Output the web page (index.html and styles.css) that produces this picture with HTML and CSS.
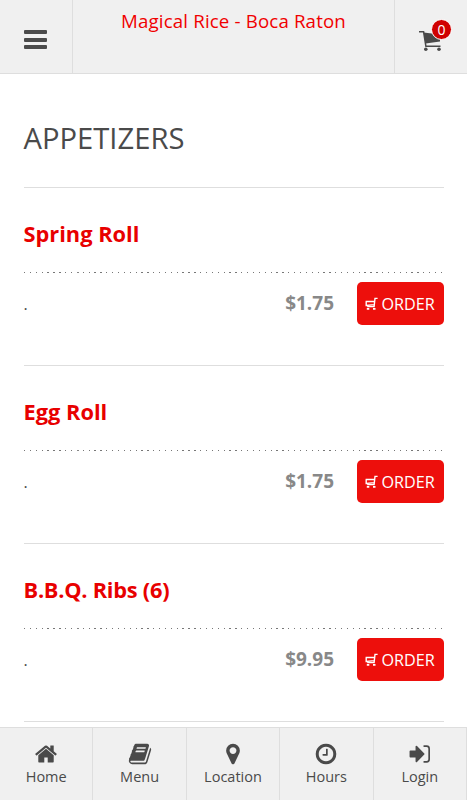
FILE: index.html
```html
<!DOCTYPE html>
<html lang="en">
<head>
<meta charset="utf-8">
<title>Magical Rice - Boca Raton</title>
<link rel="stylesheet" href="styles.css">
</head>
<body>
<svg class="defs" width="0" height="0">
  <symbol id="order-cart" viewBox="0 0 13 13">
    <path d="M.6 4.500H9M1.200 4.500V8.500L9.500 7.600M12.600 1.400H10L9.100 9.600H2.200" fill="none" stroke="currentColor" stroke-width="1.400"/>
    <path d="M1.800 11h2.500v1.800H1.800zM8 11h2.500v1.800H8z" fill="currentColor"/>
  </symbol>
</svg>
<div class="app">
  <header class="topbar">
    <button class="topbar-side menu-button" aria-label="Menu"><span class="bars"><i></i><i></i><i></i></span></button>
    <h1 class="brand"><span>Magical Rice - Boca Raton</span></h1>
    <button class="topbar-side cart-button" aria-label="Cart">
      <span class="cart">
        <svg class="cart-icon" viewBox="0 0 24 22" fill="none" stroke="#4a4a4a">
          <path d="M0 1.800H4.600L6.900 16.300H21.500" stroke-width="1.500"/>
          <path d="M4.600 2.500L21 4.500V11.400L6.600 13.500Z" fill="#4a4a4a" stroke="none"/>
          <circle cx="6.800" cy="19.200" r="1.800" fill="#4a4a4a" stroke="none"/>
          <circle cx="20" cy="19.200" r="1.800" fill="#4a4a4a" stroke="none"/>
        </svg>
        <span class="badge">0</span>
      </span>
    </button>
  </header>
  <main class="content">
    <h2 class="section"><span>APPETIZERS</span></h2>
    <article class="item">
      <h3 class="item-name"><span>Spring Roll</span></h3>
      <div class="item-row"><span class="desc">.</span><span class="price">$1.75</span><button class="order"><svg><use href="#order-cart"/></svg><span>ORDER</span></button></div>
    </article>
    <article class="item">
      <h3 class="item-name"><span>Egg Roll</span></h3>
      <div class="item-row"><span class="desc">.</span><span class="price">$1.75</span><button class="order"><svg><use href="#order-cart"/></svg><span>ORDER</span></button></div>
    </article>
    <article class="item">
      <h3 class="item-name item-name-tight"><span>B.B.Q. Ribs (6)</span></h3>
      <div class="item-row"><span class="desc">.</span><span class="price">$9.95</span><button class="order"><svg><use href="#order-cart"/></svg><span>ORDER</span></button></div>
    </article>
  </main>
  <nav class="tabs">
    <a class="tab"><svg viewBox="0 0 1792 1792"><path d="M1472 992v480q0 26-19 45t-45 19h-384v-384h-256v384h-384q-26 0-45-19t-19-45v-480q0-1 .5-3t.5-3l575-474 575 474q1 2 1 6zm223-69l-62 74q-8 9-21 11h-3q-13 0-21-7l-692-577-692 577q-12 8-24 7-13-2-21-11l-62-74q-8-10-7-23.5t11-21.5l719-599q32-26 76-26t76 26l244 204v-195q0-14 9-23t23-9h192q14 0 23 9t9 23v408l219 182q10 8 11 21.5t-7 23.5z"/></svg><span>Home</span></a>
    <a class="tab"><svg viewBox="0 0 1792 1792"><path d="M1703 478q40 57 18 129l-275 906q-19 64-76.500 107.500t-122.500 43.500h-923q-77 0-148.500-53.500t-99.500-131.500q-24-67-2-127 0-4 3-27t4-37q1-8-3-21.500t-3-19.500q2-11 8-21t16.500-23.500 16.500-23.500q23-38 45-91.500t30-91.500q3-10 .5-30t-.5-28q3-11 17-28t17-23q21-36 42-92t25-90q1-9-2.500-32t.5-28q4-13 22-30.500t22-22.500q19-26 42.500-84.500t27.500-96.500q1-8-3-25.500t-2-26.500q2-8 9-18t18-23 17-21q8-12 16.500-30.500t15-35 16-36 19.500-32 26.500-23.500 36-11.500 47.500 5.500l-1 3q38-9 51-9h761q74 0 114 56t18 130l-274 906q-36 119-71.500 153.500t-128.500 34.500h-869q-27 0-38 15-11 16-1 43 24 70 144 70h923q29 0 56-15.500t35-41.500l300-987q7-22 5-57 38 15 59 43zm-1064 2q-4 13 2 22.500t20 9.500h608q13 0 25.500-9.500t16.500-22.500l21-64q4-13-2-22.500t-20-9.500h-608q-13 0-25.500 9.500t-16.500 22.500zm-83 256q-4 13 2 22.500t20 9.500h608q13 0 25.500-9.500t16.500-22.500l21-64q4-13-2-22.500t-20-9.500h-608q-13 0-25.500 9.500t-16.500 22.500z"/></svg><span>Menu</span></a>
    <a class="tab"><svg viewBox="0 0 1792 1792"><path d="M1152 640q0-106-75-181t-181-75-181 75-75 181 75 181 181 75 181-75 75-181zm256 0q0 109-33 179l-364 774q-16 33-47.500 52t-67.500 19-67.500-19-46.500-52l-365-774q-33-70-33-179 0-212 150-362t362-150 362 150 150 362z"/></svg><span>Location</span></a>
    <a class="tab"><svg viewBox="0 0 1792 1792"><path d="M1024 544v448q0 14-9 23t-23 9h-320q-14 0-23-9t-9-23v-64q0-14 9-23t23-9h224v-352q0-14 9-23t23-9h64q14 0 23 9t9 23zm416 352q0-148-73-273t-198-198-273-73-273 73-198 198-73 273 73 273 198 198 273 73 273-73 198-198 73-273zm224 0q0 209-103 385.500t-279.500 279.500-385.500 103-385.500-103-279.500-279.500-103-385.500 103-385.500 279.500-279.500 385.500-103 385.500 103 279.500 279.500 103 385.500z"/></svg><span>Hours</span></a>
    <a class="tab"><svg viewBox="0 0 1792 1792"><path d="M1235 896q0 26-19 45l-544 544q-19 19-45 19t-45-19-19-45v-288H180q-26 0-45-19t-19-45V704q0-26 19-45t45-19h383V352q0-26 19-45t45-19 45 19l544 544q19 19 19 45z"/><path d="M1160 310h230q190 0 190 190v792q0 190-190 190h-230" fill="none" stroke="#4a4a4a" stroke-width="125"/></svg><span>Login</span></a>
  </nav>
</div>
</body>
</html>
```
FILE: styles.css
```css
* { box-sizing: border-box; }
body { margin: 0; background: #fff; color: #4a4a4a; font-family: "Open Sans", sans-serif; }
h1, h2, h3 { margin: 0; }
button { border: 0; padding: 0; font: inherit; color: inherit; }
.defs { display: block; }
.app { height: 800px; display: flex; flex-direction: column; overflow: hidden; }
.topbar { flex: none; height: 74px; display: grid; grid-template-columns: 73px 1fr 73px; background: #f0f0f0; border-bottom: 1px solid #dedede; }
.topbar-side { background: none; display: flex; }
.menu-button { border-right: 1px solid #dedede; padding: 30px 0 0 24px; }
.cart-button { border-left: 1px solid #dedede; padding: 30px 0 0 24px; }
.bars { display: flex; flex-direction: column; gap: 3.5px; }
.bars i { width: 23px; height: 4px; border-radius: 1px; background: #4a4a4a; }
.cart { position: relative; display: block; width: 24px; height: 22px; }
.cart-icon { display: block; width: 24px; height: 22px; }
.badge { position: absolute; left: 12px; top: -11px; width: 21px; height: 21px; border: 1px solid #fff; border-radius: 50%; background: #d00000; color: #fff; font-size: 14px; line-height: 19px; text-align: center; }
.brand { text-align: center; color: #f00000; font-size: 18.700px; font-weight: 400; letter-spacing: .15px; line-height: 26px; padding-top: 8px; white-space: nowrap; }
.content { flex: 1; min-height: 0; padding: 0 23.500px; }
.section { height: 113px; padding-top: 44px; font-size: 29.200px; line-height: 40px; font-weight: 400; }
.item { height: 178px; border-top: 1px solid #dedede; }
.item:last-child { height: 179px; border-bottom: 1px solid #dedede; }
.item-name { height: 86px; padding-top: 31px; font-size: 21.800px; line-height: 30px; font-weight: 700; color: #e80000; background: linear-gradient(#888, #888) 53px 83.500px / 2px 1.300px no-repeat, repeating-linear-gradient(90deg, #777 0 1.300px, transparent 1.300px 5.870px) 0 83.500px / 418px 1.300px no-repeat; }
.item-name-tight { letter-spacing: -.25px; }
.item-row { display: flex; align-items: flex-start; padding-top: 8px; }
.desc { flex: 1; font-size: 16px; line-height: 44px; }
.price { margin-right: 22.500px; font-size: 19px; line-height: 43px; font-weight: 700; color: #888; }
.order { width: 87px; height: 43px; display: flex; align-items: center; padding-left: 8px; gap: 4px; border-radius: 5px; background: #ed0f0c; color: #fff; font-size: 16.200px; }
.order svg { width: 13px; height: 13px; }
.tabs { flex: none; height: 73px; display: grid; grid-template-columns: repeat(5, 1fr); background: #f0f0f0; border-top: 1px solid #dedede; }
.tab { display: flex; flex-direction: column; align-items: center; border-right: 1px solid #dedede; padding-top: 14px; font-size: 14.500px; line-height: 20px; }
.tab svg { width: 24px; height: 24px; fill: #4a4a4a; }
.tab span { margin-top: 1px; }
```
